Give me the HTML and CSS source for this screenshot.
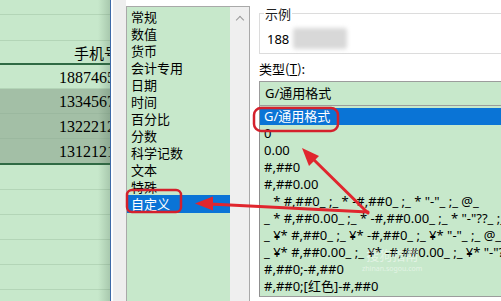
FILE: index.html
```html
<!DOCTYPE html>
<html lang="zh-CN">
<head>
<meta charset="utf-8">
<title>设置单元格格式</title>
<link rel="stylesheet" href="styles.css">
</head>
<body>
<div class="screen">
  <div class="sheet">
    <div class="col">
      <div class="cell c-top"></div>
      <div class="cell c-blank"></div>
      <div class="cell c-head">手机号码</div>
      <div class="cell c-data">18874651234</div>
      <div class="cell c-data sel">13345678901</div>
      <div class="cell c-data sel">13222123456</div>
      <div class="cell c-data sel last">13121212345</div>
      <div class="cell c-empty"></div>
      <div class="cell c-empty"></div>
      <div class="cell c-empty"></div>
      <div class="cell c-empty"></div>
      <div class="cell c-empty"></div>
      <div class="cell c-empty"></div>
    </div>
  </div>

  <div class="dialog">
    <div class="edge"></div>
    <div class="cats">
      <ul class="catlist">
        <li>常规</li>
        <li>数值</li>
        <li>货币</li>
        <li>会计专用</li>
        <li>日期</li>
        <li>时间</li>
        <li>百分比</li>
        <li>分数</li>
        <li>科学记数</li>
        <li>文本</li>
        <li>特殊</li>
        <li class="active">自定义</li>
      </ul>
      <div class="scroll"><span class="up"></span></div>
    </div>

    <div class="right">
      <fieldset class="sample">
        <legend>示例</legend>
        <div class="sample-val">188<span class="blur"></span></div>
      </fieldset>
      <div class="type-label">类型(<u>T</u>):</div>
      <div class="type-input">G/通用格式</div>
      <ul class="fmtlist">
        <li class="active">G/通用格式</li>
        <li>0</li>
        <li>0.00</li>
        <li>#,##0</li>
        <li>#,##0.00</li>
        <li>_ * #,##0_ ;_ * -#,##0_ ;_ * "-"_ ;_ @_</li>
        <li>_ * #,##0.00_ ;_ * -#,##0.00_ ;_ * "-"??_ ;_ @_</li>
        <li>_ ¥* #,##0_ ;_ ¥* -#,##0_ ;_ ¥* "-"_ ;_ @_</li>
        <li>_ ¥* #,##0.00_ ;_ ¥* -#,##0.00_ ;_ ¥* "-"??_ ;_ @_</li>
        <li>#,##0;-#,##0</li>
        <li>#,##0;[红色]-#,##0</li>
      </ul>
    </div>
  </div>

  <div class="watermark">
    <span class="wm-logo">搜狗指南</span>
    <span class="wm-url">zhinan.sogou.com</span>
  </div>

  <svg class="annot" width="501" height="301" viewBox="0 0 501 301">
    <rect x="127" y="190" width="54" height="22" rx="5" ry="5" class="ring"/>
    <rect x="254" y="108" width="84" height="23" rx="7" ry="7" class="ring"/>
    <line x1="368" y1="213" x2="310" y2="156" class="shaft"/>
    <polygon points="302,148 309,166 319,156" class="head"/>
    <line x1="368" y1="212" x2="210" y2="204" class="shaft"/>
    <polygon points="195,203.5 213,196.5 213,210.5" class="head"/>
  </svg>
</div>
</body>
</html>
```

FILE: styles.css
```css
* { box-sizing: border-box; }

html, body {
  margin: 0;
  padding: 0;
  background: #ffffff;
}

.screen {
  position: relative;
  width: 501px;
  height: 301px;
  overflow: hidden;
  display: flex;
  font-family: "Noto Sans", "Noto Sans CJK SC", sans-serif;
  font-size: 13px;
  color: #000;
}

/* ---------- spreadsheet ---------- */
.sheet {
  position: relative;
  flex: 0 0 111px;
  height: 301px;
  overflow: hidden;
  background: #c7e8cb;
  border-right: 1px solid #3e6aa8;
}

.sheet::after {
  content: "";
  position: absolute;
  top: 0;
  right: 0;
  bottom: 0;
  width: 12px;
  background: linear-gradient(to right, rgba(60, 90, 70, 0), rgba(60, 90, 70, 0.22));
}

.col {
  width: 148px;
  display: flex;
  flex-direction: column;
}

.cell {
  border-bottom: 1px solid #b3d5b7;
  text-align: right;
  font-family: "Liberation Serif", "Noto Sans CJK SC", serif;
  font-size: 16px;
  line-height: 24px;
  white-space: nowrap;
}

.c-top { height: 15px; }
.c-blank { height: 26px; }

.c-head {
  height: 24px;
  border-bottom: 2px solid #2f6a44;
  font-family: "Noto Sans CJK SC", sans-serif;
  font-size: 15px;
  line-height: 22px;
  padding-right: 14px;
  padding-top: 1px;
}

.c-data {
  height: 24px;
  padding-top: 1px;
  padding-right: 1px;
}

.c-data.sel {
  height: 25px;
  background: #a3bfa6;
  border-bottom-color: #9bb89f;
}

.c-data.last {
  border-bottom: 2px solid #2f6a44;
  height: 26px;
}

.c-empty { height: 25px; }

/* ---------- dialog ---------- */
.dialog {
  flex: 1;
  display: flex;
  align-items: flex-start;
  background: #ffffff;
  height: 301px;
}

.edge {
  flex: 0 0 13px;
  height: 301px;
  margin-left: 2px;
  background: #eeeeee;
}

.cats {
  flex: 0 0 124px;
  margin-top: 6px;
  height: 300px;
  display: flex;
  border: 1px solid #a9a9a9;
  border-bottom: none;
}

.catlist {
  list-style: none;
  margin: 0;
  padding: 0;
  flex: 1;
  background: #c7e8cb;
}

.catlist li {
  height: 17px;
  line-height: 17px;
  padding-left: 4px;
  font-family: "Noto Sans CJK SC", sans-serif;
  font-size: 13px;
}

.catlist li:first-child { margin-top: 1px; }

.catlist li.active {
  background: #0a74d6;
  color: #fff;
  height: 18px;
}

.scroll {
  flex: 0 0 19px;
  background: #efefef;
  display: flex;
  justify-content: center;
  padding-top: 8px;
}

.up {
  width: 6px;
  height: 6px;
  border-left: 1.5px solid #9a9a9a;
  border-top: 1.5px solid #9a9a9a;
  transform: rotate(45deg);
  margin-top: 2px;
}

.right {
  flex: 1;
  margin-left: 9px;
  display: flex;
  flex-direction: column;
  min-width: 0;
}

.sample {
  margin: 6px 0 0 0;
  padding: 0 0 0 7px;
  border: 1px solid #dcdcdc;
  border-right: none;
  height: 48px;
  min-width: 0;
}

.sample legend {
  padding: 0 1px;
  margin-left: -3px;
  font-family: "Noto Sans CJK SC", sans-serif;
  font-size: 13px;
  line-height: 15px;
  color: #222;
}

.sample-val {
  display: flex;
  align-items: center;
  margin-top: 7px;
  font-size: 13px;
  line-height: 18px;
}

.blur {
  display: inline-block;
  width: 54px;
  height: 21px;
  margin-left: 4px;
  background: #d8d8d8;
  filter: blur(2px);
  border-radius: 3px;
}

.type-label {
  margin-top: 8px;
  height: 14px;
  line-height: 14px;
  font-family: "Noto Sans CJK SC", sans-serif;
  font-size: 13px;
}

.type-input {
  margin-top: 5px;
  height: 25px;
  border: 1px solid #9c9c9c;
  border-right: none;
  background: #c7e8cb;
  padding-left: 5px;
  line-height: 22px;
  font-family: "Noto Sans", "Noto Sans CJK SC", sans-serif;
  font-size: 13px;
}

.fmtlist {
  list-style: none;
  margin: 0;
  padding: 2px 0 0 0;
  height: 191px;
  background: #c7e8cb;
  border-left: 1px solid #8f8f8f;
  border-bottom: 1px solid #9c9c9c;
}

.fmtlist li {
  height: 17px;
  line-height: 17px;
  padding-left: 4px;
  white-space: pre;
  overflow: hidden;
  font-size: 13px;
}

.fmtlist li.active {
  background: #0a74d6;
  color: #fff;
}

/* ---------- watermark & annotations ---------- */
.watermark {
  position: absolute;
  left: 362px;
  top: 248px;
  display: flex;
  flex-direction: column;
  align-items: center;
  color: rgba(255, 255, 255, 0.5);
  pointer-events: none;
}

.wm-logo {
  font-family: "Noto Sans CJK SC", sans-serif;
  font-size: 13px;
  line-height: 14px;
}

.wm-url {
  font-family: "Noto Sans", sans-serif;
  font-size: 7px;
  line-height: 9px;
  margin-top: 2px;
}

.annot {
  position: absolute;
  left: 0;
  top: 0;
  pointer-events: none;
}

.ring {
  fill: none;
  stroke: #d4202c;
  stroke-width: 2.5;
}

.shaft {
  stroke: #e0262e;
  stroke-width: 3;
  stroke-linecap: round;
}

.head {
  fill: #e0262e;
}
```
